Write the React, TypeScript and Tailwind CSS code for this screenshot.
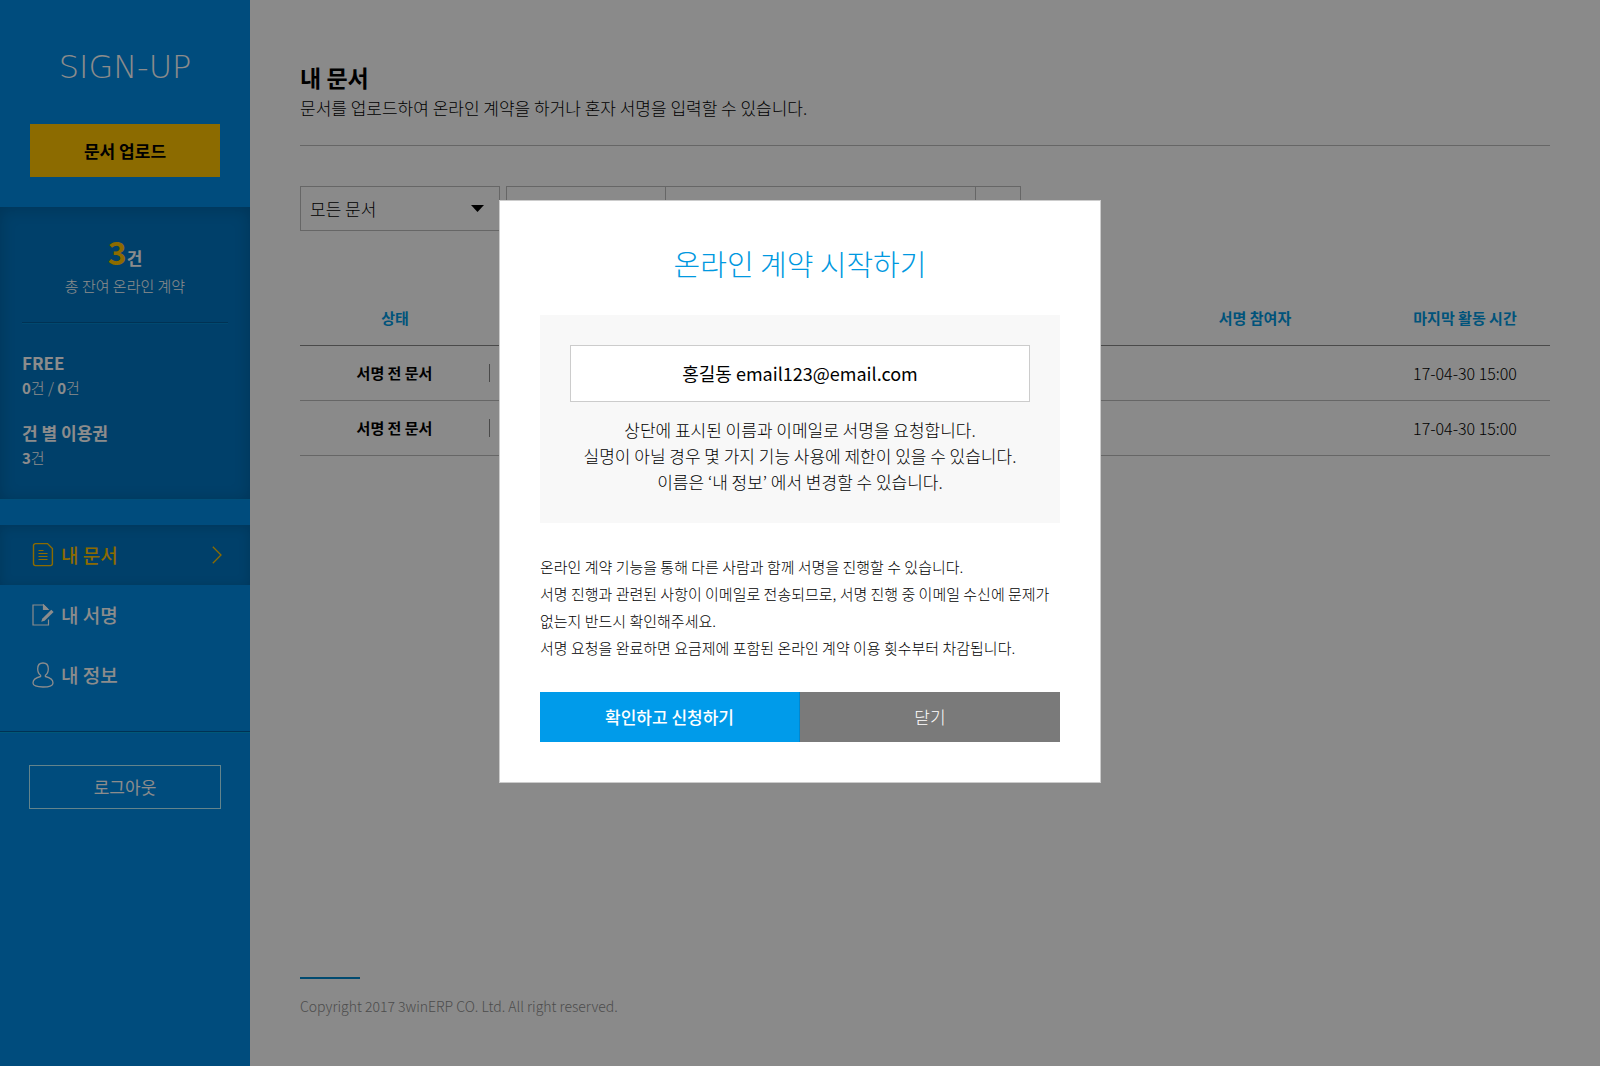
import { useState } from "react";

interface DocumentRow {
  id: number;
  status: string;
  title: string;
  signers: string;
  updatedAt: string;
}

const documents: DocumentRow[] = [
  { id: 1, status: "서명 전 문서", title: "", signers: "", updatedAt: "17-04-30 15:00" },
  { id: 2, status: "서명 전 문서", title: "", signers: "", updatedAt: "17-04-30 15:00" },
];

const DocumentIcon = () => (
  <svg width="22" height="26" viewBox="0 0 22 26" fill="none" stroke="currentColor" strokeWidth="1.4">
    <path d="M14.5 1.6H3.500a2 2 0 0 0-2 2v18a2 2 0 0 0 2 2h14.900a2 2 0 0 0 2-2V6.500L15.500 1.600z" />
    <path d="M6.500 8.500h5M6.500 11.500h9M6.500 14.500h9M6.500 17.500h9" strokeWidth="1.2" />
  </svg>
);

const SignIcon = () => (
  <svg width="22" height="22" viewBox="0 0 22 22" fill="none" stroke="currentColor" strokeWidth="1.2">
    <path d="M16.500 15.500v5.500H1V1h10.500l4 4" />
    <path d="M11.500 1v4.500h4.500z" fill="currentColor" />
    <path d="M9.200 17.800l1.200-3.200L19.300 5.800l2.300 2.300-9 8.600z" fill="currentColor" stroke="none" />
  </svg>
);

const UserIcon = () => (
  <svg width="22" height="26" viewBox="0 0 22 26" fill="none" stroke="currentColor" strokeWidth="1.3">
    <path d="M11 1c3.200 0 5.300 2.300 5.300 5.800 0 2.800-1.200 5.300-2.900 6.500v1.200c3.900.9 7.600 3 7.600 6.400C21 23.600 17.500 25 11 25S1 23.600 1 20.900c0-3.400 3.700-5.500 7.600-6.400v-1.200C6.900 12.100 5.700 9.600 5.700 6.800 5.700 3.300 7.800 1 11 1z" />
  </svg>
);

const menu = [
  { label: "내 문서", icon: DocumentIcon },
  { label: "내 서명", icon: SignIcon },
  { label: "내 정보", icon: UserIcon },
];

const Sidebar = () => {
  const active = "내 문서";

  return (
    <aside className="w-[250px] shrink-0 bg-[#008ae3] text-white">
      <div className="h-[207px] px-[30px] pt-11">
        <div className="h-20 text-center font-['DejaVu_Sans',sans-serif] text-[32px] leading-[46px] font-extralight">
          SIGN-UP
        </div>
        <button className="h-[53px] w-full bg-[#ffc300] text-[17px] font-bold text-black">문서 업로드</button>
      </div>

      <section className="h-[292px] bg-[#0075c1] px-[22px] pt-[22px] shadow-[inset_0_2px_16px_rgba(0,0,0,0.18)]">
        <div className="h-[94px] border-b border-[#005c99] text-center shadow-[0_1px_0_#0085cc]">
          <p className="flex h-[45px] items-baseline justify-center leading-[44px]">
            <strong className="text-[32px] font-bold text-[#ffc300]">3</strong>
            <strong className="text-[17px] font-bold">건</strong>
          </p>
          <p className="text-[15px] leading-[24px] font-light">총 잔여 온라인 계약</p>
        </div>
        <dl className="pt-[27px] text-[15px] leading-6 font-light">
          <dt className="text-[17px] leading-[26px] font-bold">FREE</dt>
          <dd>
            <b className="font-bold">0</b>건 / <b className="font-bold">0</b>건
          </dd>
          <dt className="mt-5 text-[17px] leading-[26px] font-bold">건 별 이용권</dt>
          <dd>
            <b className="font-bold">3</b>건
          </dd>
        </dl>
      </section>

      <nav className="h-[233px] border-t border-b border-t-[#0090dc] border-b-[#005c99] pt-[25px] shadow-[0_1px_0_#00a0dc]">
        {menu.map(({ label, icon: Icon }) => (
          <a
            key={label}
            href="#"
            className={
              label === active
                ? "flex h-[60px] items-center gap-[7px] bg-[#0075c1] pr-7 pl-8 text-[19px] font-medium text-[#ffc300] shadow-[inset_0_2px_12px_rgba(0,0,0,0.15)]"
                : "flex h-[60px] items-center gap-[7px] pr-7 pl-8 text-[19px] font-medium"
            }
          >
            <Icon />
            {label}
            {label === active && (
              <svg className="ml-auto" width="10" height="18" viewBox="0 0 10 18" fill="none" stroke="currentColor" strokeWidth="1.3">
                <path d="M.8.8 9 9 .8 17.200" />
              </svg>
            )}
          </a>
        ))}
      </nav>

      <div className="px-[29px] pt-[33px]">
        <button className="h-11 w-full border border-[#b5f0ff] text-[17px]">로그아웃</button>
      </div>
    </aside>
  );
};

const Filters = () => (
  <form className="mt-10 flex gap-[6px]">
    <div className="relative w-[200px]">
      <select
        aria-label="문서 상태"
        className="h-[45px] w-full appearance-none border border-[#bbb] bg-transparent px-[9px] text-[17px] font-light text-black"
      >
        <option>모든 문서</option>
      </select>
      <svg className="pointer-events-none absolute top-[19px] right-4" width="13" height="7" viewBox="0 0 13 7">
        <path d="M0 0h13L6.500 7z" />
      </svg>
    </div>
    <div className="flex h-[45px] w-[515px] border border-[#bbb]">
      <select aria-label="검색 조건" className="w-[159px] appearance-none border-r border-[#bbb]" />
      <input type="text" aria-label="검색어" className="min-w-0 flex-1" />
      <button type="button" aria-label="검색" className="w-[45px] border-l border-[#bbb]" />
    </div>
  </form>
);

const DocumentTable = () => (
  <table className="mt-[61px] w-full table-fixed text-[15px]">
    <thead>
      <tr className="h-[53px] border-b border-[#888] text-[#0098e0]">
        <th className="w-[190px] font-bold">상태</th>
        <th aria-label="문서" />
        <th className="w-[250px] font-bold">서명 참여자</th>
        <th className="w-[170px] font-bold">마지막 활동 시간</th>
      </tr>
    </thead>
    <tbody>
      {documents.map((doc) => (
        <tr key={doc.id} className="h-[55px] border-b border-[#bbb]">
          <td className="text-center font-bold">
            <span className="block h-[18px] border-r border-[#888] leading-[18px]">{doc.status}</span>
          </td>
          <td>{doc.title}</td>
          <td className="text-center">{doc.signers}</td>
          <td className="text-center text-base font-light">{doc.updatedAt}</td>
        </tr>
      ))}
    </tbody>
  </table>
);

const StartContractModal = ({ onClose }: { onClose: () => void }) => (
  <div className="fixed inset-0 flex items-start justify-center bg-black/45 pt-[200px]">
    <div role="dialog" aria-modal="true" aria-labelledby="modal-title" className="w-[602px] border border-[#ccc] bg-white px-10 pb-10">
      <h2 id="modal-title" className="pt-10 pb-[30px] text-center text-[29px] leading-[44px] font-light text-[#0098e0]">
        온라인 계약 시작하기
      </h2>
      <div className="bg-[#f8f8f8] p-[30px] pb-7 text-center">
        <input
          type="text"
          readOnly
          aria-label="이름과 이메일"
          value="홍길동 email123@email.com"
          className="h-[57px] w-full border border-[#ccc] bg-white pb-[2px] text-center text-[18px] text-black"
        />
        <p className="mt-[15px] text-[17px] leading-[26px] font-light">
          상단에 표시된 이름과 이메일로 서명을 요청합니다.
          <br />
          실명이 아닐 경우 몇 가지 기능 사용에 제한이 있을 수 있습니다.
          <br />
          이름은 ‘내 정보’ 에서 변경할 수 있습니다.
        </p>
      </div>
      <p className="mt-[30px] text-[15px] leading-[27px] font-light break-keep">
        온라인 계약 기능을 통해 다른 사람과 함께 서명을 진행할 수 있습니다.
        <br />
        서명 진행과 관련된 사항이 이메일로 전송되므로, 서명 진행 중 이메일 수신에 문제가 없는지 반드시 확인해주세요.
        <br />
        서명 요청을 완료하면 요금제에 포함된 온라인 계약 이용 횟수부터 차감됩니다.
      </p>
      <div className="mt-[31px] grid h-[50px] grid-cols-2 text-[17px] text-white">
        <button className="border-r border-[#0088d0] bg-[#009bea] font-medium">확인하고 신청하기</button>
        <button onClick={onClose} className="bg-[#7a7a7a] font-light">
          닫기
        </button>
      </div>
    </div>
  </div>
);

const App = () => {
  const [modalOpen, setModalOpen] = useState(true);

  return (
    <div className="flex min-h-screen bg-[#fbfbfb] font-['Noto_Sans_CJK_KR',sans-serif] text-black">
      <Sidebar />
      <main className="flex min-w-0 flex-1 flex-col px-[50px] pt-[59px]">
        <header className="border-b border-[#bbb] pb-6">
          <h1 className="text-[23px] leading-9 font-bold">내 문서</h1>
          <p className="text-[17px] leading-[26px] font-light">
            문서를 업로드하여 온라인 계약을 하거나 혼자 서명을 입력할 수 있습니다.
          </p>
        </header>
        <Filters />
        <DocumentTable />
        <footer className="mt-auto pb-[50px]">
          <div className="h-[2px] w-[60px] bg-[#0088cc]" />
          <p className="mt-[17px] text-sm font-light text-[#8c8c8c]">Copyright 2017 3winERP CO. Ltd. All right reserved.</p>
        </footer>
      </main>
      {modalOpen && <StartContractModal onClose={() => setModalOpen(false)} />}
    </div>
  );
};

export default App;
